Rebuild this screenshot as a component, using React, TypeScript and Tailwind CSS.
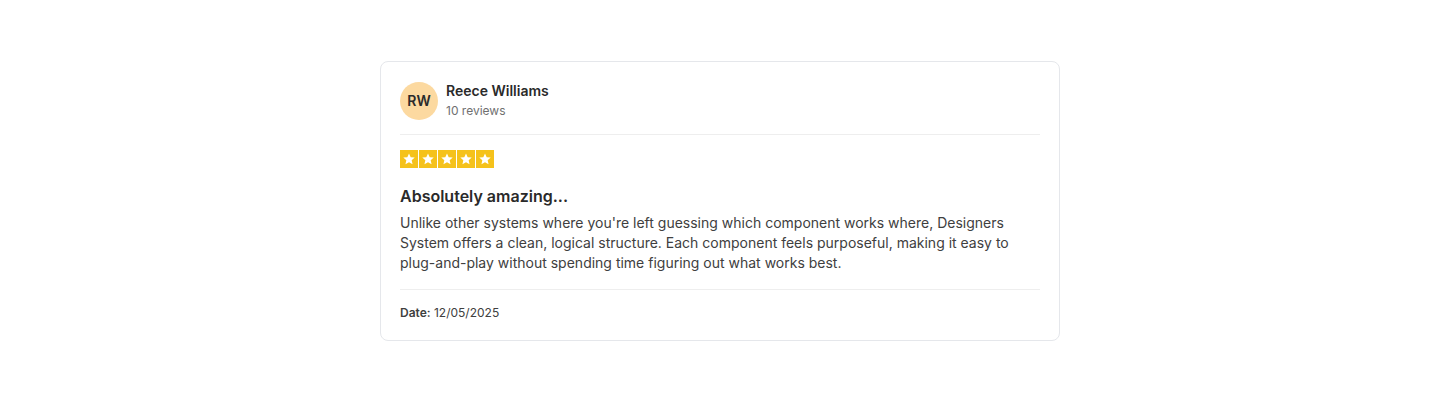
import React from "react";

function StarBox() {
  return (
    <div className="flex h-[18px] w-[18px] items-center justify-center bg-[#f5c21b]">
      <svg viewBox="0 0 24 24" className="h-[14px] w-[14px]" fill="#ffffff">
        <path d="M12 2.5l2.9 6.3 6.9.7-5.2 4.6 1.5 6.8L12 17.4l-6.1 3.5 1.5-6.8-5.2-4.6 6.9-.7z" />
      </svg>
    </div>
  );
}

export default function App() {
  return (
    <div className="flex min-h-[401px] w-full items-center justify-center bg-white font-['Inter',sans-serif]">
      <div className="w-[680px] rounded-lg border border-[#e5e7eb] bg-white px-[19px] pt-[19px] pb-[17px]">
        <div className="flex items-center gap-2 pb-[13px] border-b border-[#eeeeee]">
          <div className="flex h-[38px] w-[38px] items-center justify-center rounded-full bg-[#fcd9a0] text-sm font-semibold text-[#2b2b2b]">
            RW
          </div>
          <div className="flex flex-col">
            <span className="text-sm font-semibold leading-5 text-[#2a2a2a]">Reece Williams</span>
            <span className="text-xs leading-5 text-[#707070]">10 reviews</span>
          </div>
        </div>

        <div className="mt-[15px] flex gap-px">
          <StarBox />
          <StarBox />
          <StarBox />
          <StarBox />
          <StarBox />
        </div>

        <h3 className="mt-4 text-base font-semibold leading-6 text-[#2a2a2a]">Absolutely amazing...</h3>
        <p className="mt-[5px] text-sm leading-5 text-[#404040]">
          Unlike other systems where you're left guessing which component works where, Designers System offers a clean, logical structure. Each component feels purposeful, making it easy to plug-and-play without spending time figuring out what works best.
        </p>

        <div className="mt-4 border-t border-[#eeeeee] pt-[13px]">
          <p className="text-xs leading-5 text-[#404040]">
            <span className="font-semibold">Date:</span> 12/05/2025
          </p>
        </div>
      </div>
    </div>
  );
}
